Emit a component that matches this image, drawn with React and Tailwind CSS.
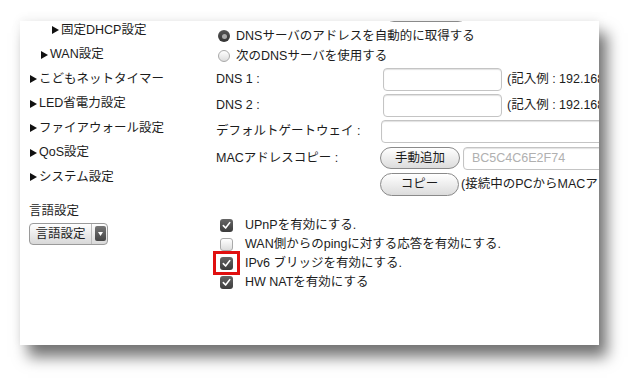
import React from 'react';

const navItems = [
  { label: '固定DHCP設定', indent: 'pl-[22px]' },
  { label: 'WAN設定', indent: 'pl-[11px]' },
  { label: 'こどもネットタイマー', indent: 'pl-0' },
  { label: 'LED省電力設定', indent: 'pl-0' },
  { label: 'ファイアウォール設定', indent: 'pl-0' },
  { label: 'QoS設定', indent: 'pl-0' },
  { label: 'システム設定', indent: 'pl-0' },
];

const options = [
  { label: 'UPnPを有効にする.', checked: true },
  { label: 'WAN側からのpingに対する応答を有効にする.', checked: false },
  { label: 'IPv6 ブリッジを有効にする.', checked: true, marked: true },
  { label: 'HW NATを有効にする', checked: true },
];

function Triangle() {
  return (
    <svg className="w-[7px] h-[8px] shrink-0" viewBox="0 0 7 8">
      <path d="M0 0 L7 4 L0 8 Z" fill="#111" />
    </svg>
  );
}

function Radio({ checked }) {
  if (checked) {
    return (
      <span className="w-[12px] h-[12px] rounded-full bg-gradient-to-b from-[#555] to-[#333] flex items-center justify-center shrink-0">
        <span className="w-[5px] h-[5px] rounded-full bg-[#aaa]" />
      </span>
    );
  }
  return (
    <span className="w-[12px] h-[12px] rounded-full border border-[#aaa] bg-gradient-to-b from-white to-[#ddd] shrink-0" />
  );
}

function Checkbox({ checked }) {
  if (checked) {
    return (
      <span className="w-[13px] h-[13px] rounded-[3px] bg-gradient-to-b from-[#666] to-[#3c3c3c] flex items-center justify-center shrink-0">
        <svg className="w-[9px] h-[9px]" viewBox="0 0 10 10" fill="none">
          <path d="M1.5 5.2 L4 7.8 L8.6 1.8" stroke="white" strokeWidth={1.8} strokeLinecap="round" strokeLinejoin="round" />
        </svg>
      </span>
    );
  }
  return (
    <span className="w-[13px] h-[13px] rounded-[3px] border border-[#aaa] bg-gradient-to-b from-white to-[#ddd] shrink-0" />
  );
}

function TextBox({ className = '', value = '' }) {
  return (
    <div className={`h-[23px] border border-[#c4c4c4] rounded-[4px] bg-white shadow-[inset_0_1px_1px_rgba(0,0,0,0.12)] flex items-center px-[8px] text-[#b0b0b0] shrink-0 ${className}`}>
      {value}
    </div>
  );
}

function PillButton({ children, className = '' }) {
  return (
    <div className={`border border-[#8a8a8a] rounded-full bg-gradient-to-b from-white to-[#dcdcdc] flex items-center justify-center shrink-0 ${className}`}>
      {children}
    </div>
  );
}

export default function App() {
  return (
    <div className="min-h-[388px] bg-white pt-[21px] pl-[20px] font-['Liberation_Sans','Noto_Sans_CJK_JP',sans-serif] text-[12.5px] text-[#1c1c1c]">
      <div className="w-[579px] h-[324px] bg-white overflow-hidden flex shadow-[8px_12px_14px_rgba(0,0,0,0.55),0_-2px_10px_rgba(0,0,0,0.06)]">
        {/* left menu */}
        <div className="w-[193px] shrink-0 pl-[10px] -mt-[3px]">
          {navItems.map((item) => (
            <div key={item.label} className={`h-[24.5px] flex items-center gap-[2px] ${item.indent}`}>
              <Triangle />
              <span>{item.label}</span>
            </div>
          ))}
          <div className="mt-[14px] h-[16px] flex items-center -ml-[1px]">言語設定</div>
          <div className="mt-[3px] -ml-[1px] w-[79px] h-[22px] border border-[#9a9a9a] rounded-[4px] bg-gradient-to-b from-white to-[#d8d8d8] flex items-center">
            <span className="w-[62px] text-center border-r border-[#bbb] leading-[20px]">言語設定</span>
            <span className="ml-[3px] w-[11px] h-[15px] rounded-[2px] bg-gradient-to-b from-[#777] to-[#444] flex items-center justify-center">
              <svg className="w-[5px] h-[4px]" viewBox="0 0 5 4">
                <path d="M0 0 L5 0 L2.5 4 Z" fill="white" />
              </svg>
            </span>
          </div>
        </div>

        {/* right settings */}
        <div className="flex-1 pl-[3px] relative">
          <PillButton className="ml-[167px] w-[86px] h-[22px] -mt-[21px]" />

          <div className="mt-[4px] h-[20px] flex items-center gap-[6px] pl-[2px]">
            <Radio checked />
            <span>DNSサーバのアドレスを自動的に取得する</span>
          </div>
          <div className="h-[20px] flex items-center gap-[6px] pl-[2px]">
            <Radio />
            <span>次のDNSサーバを使用する</span>
          </div>

          <div className="mt-[2px] h-[23px] flex items-center">
            <span className="w-[167px] shrink-0">DNS 1 :</span>
            <TextBox className="w-[119px]" />
            <span className="ml-[5px] whitespace-nowrap">(記入例 : 192.168.0.1)</span>
          </div>
          <div className="mt-[3px] h-[23px] flex items-center">
            <span className="w-[167px] shrink-0">DNS 2 :</span>
            <TextBox className="w-[119px]" />
            <span className="ml-[5px] whitespace-nowrap">(記入例 : 192.168.0.1)</span>
          </div>
          <div className="mt-[3px] h-[23px] flex items-center">
            <span className="w-[165px] shrink-0">デフォルトゲートウェイ :</span>
            <TextBox className="w-[240px]" />
          </div>
          <div className="mt-[4px] h-[22px] flex items-center">
            <span className="w-[164px] shrink-0">MACアドレスコピー :</span>
            <PillButton className="w-[80px] h-[22px]">手動追加</PillButton>
            <TextBox className="ml-[3px] w-[160px] h-[22px]" value="BC5C4C6E2F74" />
          </div>
          <div className="mt-[4px] h-[23px] flex items-center">
            <span className="w-[164px] shrink-0" />
            <PillButton className="w-[79px] h-[23px]">コピー</PillButton>
            <span className="ml-[2px] whitespace-nowrap">(接続中のPCからMACアドレスをコピーします)</span>
          </div>

          <div className="mt-[20px]">
            {options.map((opt) => (
              <div key={opt.label} className="h-[19px] flex items-center gap-[12px] pl-[4px]">
                <span className="relative flex">
                  <Checkbox checked={opt.checked} />
                  {opt.marked && (
                    <span className="absolute -left-[7px] -top-[6px] w-[27px] h-[24px] border-[3px] border-[#e01010]" />
                  )}
                </span>
                <span className="whitespace-nowrap">{opt.label}</span>
              </div>
            ))}
          </div>
        </div>
      </div>
    </div>
  );
}
